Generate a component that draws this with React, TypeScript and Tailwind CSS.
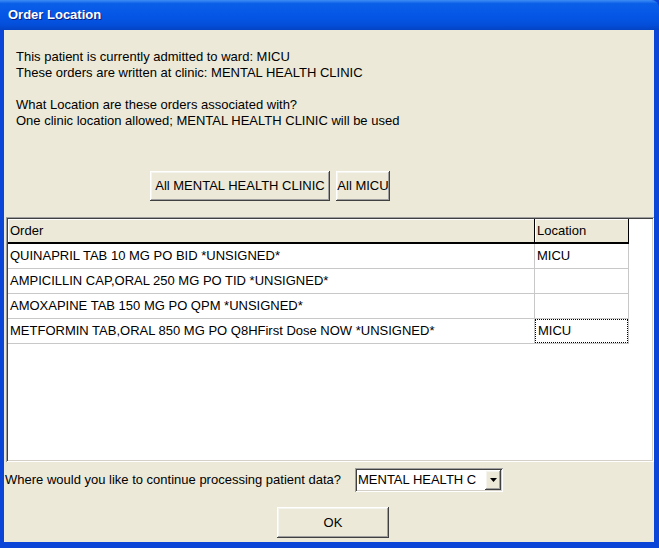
import React from 'react';

const orders = [
  { text: 'QUINAPRIL TAB 10 MG PO BID *UNSIGNED*', loc: 'MICU' },
  { text: 'AMPICILLIN CAP,ORAL 250 MG PO TID *UNSIGNED*', loc: '' },
  { text: 'AMOXAPINE TAB 150 MG PO QPM *UNSIGNED*', loc: '' },
  { text: 'METFORMIN TAB,ORAL 850 MG PO Q8HFirst Dose NOW *UNSIGNED*', loc: 'MICU', focused: true },
];

// classic 3D raised button
const raised =
  'bg-[#ECE9D8] shadow-[inset_-1px_-1px_0_#404040,inset_1px_1px_0_#ffffff,inset_-2px_-2px_0_#a0a0a0,inset_2px_2px_0_#f5f4ee]';
const sunken =
  'shadow-[inset_1px_1px_0_#a0a0a0,inset_-1px_-1px_0_#ffffff,inset_2px_2px_0_#404040,inset_-2px_-2px_0_#d4d0c8]';

export default function App() {
  return (
    <div className="w-[659px] h-[548px] flex flex-col bg-[#0A45D8] text-[13px] text-black font-['Liberation_Sans',Arial,sans-serif] overflow-hidden">
      {/* Title bar */}
      <div className="h-[30px] shrink-0 flex items-center pl-[8px] rounded-tr-[8px] bg-[linear-gradient(to_bottom,#3D8DF5_0%,#0A5FE8_12%,#0556E6_50%,#0450DC_80%,#0343C4_100%)]">
        <span className="text-white font-bold text-[13px] [text-shadow:1px_1px_0_#0a1e80]">Order Location</span>
      </div>

      {/* Body */}
      <div className="flex-1 flex flex-col ml-[4px] mr-[5px] mb-[6px] bg-[#ECE9D8]">
        <div className="pt-[19px] pl-[12px] leading-[16px]">
          <p>This patient is currently admitted to ward: MICU</p>
          <p>These orders are written at clinic: MENTAL HEALTH CLINIC</p>
          <p>&nbsp;</p>
          <p>What Location are these orders associated with?</p>
          <p>One clinic location allowed; MENTAL HEALTH CLINIC will be used</p>
        </div>

        <div className="flex gap-[6px] pl-[146px] mt-[42px]">
          <button className={`${raised} w-[180px] h-[30px] flex items-center justify-center whitespace-nowrap`}>All MENTAL HEALTH CLINIC</button>
          <button className={`${raised} w-[54px] h-[30px] flex items-center justify-center whitespace-nowrap`}>All MICU</button>
        </div>

        {/* Grid */}
        <div className={`${sunken} mt-[16px] ml-[2px] h-[245px] p-[2px] bg-white`}>
          <div className="flex h-[25px]">
            <div className="w-[527px] bg-[#ECE9D8] border-r border-b-2 border-black shadow-[inset_1px_1px_0_#ffffff] flex items-center pl-[2px]">Order</div>
            <div className="w-[94px] bg-[#ECE9D8] border-r border-b-2 border-black shadow-[inset_1px_1px_0_#ffffff] flex items-center pl-[2px]">Location</div>
          </div>
          {orders.map((o) => (
            <div key={o.text} className="flex h-[25px]">
              <div className="w-[527px] border-r border-b border-[#c8c8c8] flex items-center pl-[2px] whitespace-nowrap">{o.text}</div>
              <div className="w-[94px] border-r border-b border-[#c8c8c8] flex">
                <div className={`flex-1 flex items-center pl-[2px] ${o.focused ? 'border border-dotted border-black' : ''}`}>{o.loc}</div>
              </div>
            </div>
          ))}
        </div>

        {/* Continue row */}
        <div className="flex items-center mt-[6px] h-[24px] pl-[1px]">
          <span className="w-[350px] whitespace-nowrap">Where would you like to continue processing patient data?</span>
          <div className={`${sunken} w-[148px] h-[24px] bg-white flex items-center p-[2px]`}>
            <span className="flex-1 pl-[1px] whitespace-nowrap overflow-hidden">MENTAL HEALTH C</span>
            <div className={`${raised} w-[16px] h-[20px] flex items-center justify-center`}>
              <svg width="7" height="4" viewBox="0 0 7 4"><path d="M0 0h7L3.5 4z" fill="#000" /></svg>
            </div>
          </div>
        </div>

        <div className="pl-[273px] mt-[15px]">
          <button className={`${raised} w-[112px] h-[31px] flex items-center justify-center`}>OK</button>
        </div>
      </div>
    </div>
  );
}
